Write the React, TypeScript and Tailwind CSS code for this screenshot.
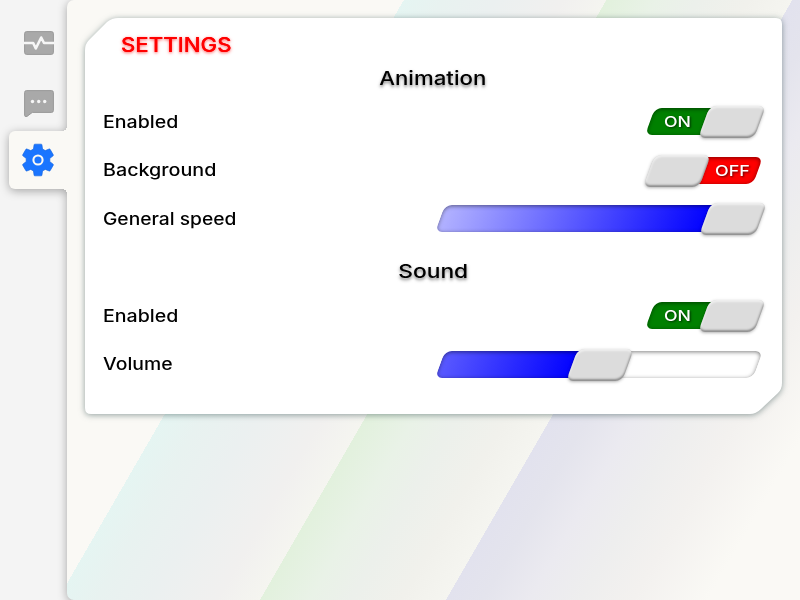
import React from 'react';

const track =
  'absolute inset-0 -skew-x-20 rounded-[7px] overflow-hidden';
const insetShade =
  'absolute inset-0 rounded-[7px] shadow-[inset_0_1px_4px_rgba(0,0,0,0.5)]';
const knob =
  'absolute -top-0.5 h-8 w-[56px] -skew-x-20 rounded-[7px] bg-[#dcdcdc] shadow-[0_1px_3px_rgba(0,0,0,0.3),inset_1px_2px_2px_rgba(255,255,255,0.55),inset_-1px_-2px_2px_rgba(0,0,0,0.35)]';

function Switch({ on }: { on: boolean }) {
  return (
    <div className="relative h-[27px] w-[108px] font-medium text-[15px] leading-[27px] text-white [text-shadow:1px_1px_2px_rgba(0,0,0,0.6)]">
      <div className={`${track} ${on ? 'bg-[#008000]' : 'bg-[#ff0000]'}`}>
        <div className={insetShade} />
      </div>
      <span
        className={`absolute top-0 origin-left ${on ? 'left-[14.5px] scale-x-[1.18]' : 'left-[65px] scale-x-[1.19]'}`}
      >
        {on ? 'ON' : 'OFF'}
      </span>
      <div className={`${knob} ${on ? 'left-[54px]' : '-left-px'}`} />
    </div>
  );
}

function Slider({ value, fill }: { value: number; fill: string }) {
  return (
    <div className="relative h-[27px] w-[318px]">
      <div className={`${track} bg-white`}>
        <div className={`h-full ${fill}`} style={{ width: value + 6 }} />
        <div className={insetShade} />
      </div>
      <div className={knob} style={{ left: value }} />
    </div>
  );
}

function Row({ label, wide, children }: { label: string; wide: string; children: React.ReactNode }) {
  return (
    <div className="flex h-[48.5px] items-center justify-between">
      <span className={`inline-block origin-left pt-px text-[17px] font-medium ${wide}`}>{label}</span>
      {children}
    </div>
  );
}

function MonitorIcon() {
  return (
    <svg width="30" height="24" viewBox="0 0 30 24" fill="#a9a9a9" stroke="#999" strokeWidth="1">
      <rect x="0.6" y="0.6" width="28.8" height="22.8" rx="2" />
      <path d="M0 12H9.2L11.8 17.5 17.2 6.5 20 12H30" fill="none" stroke="#f6f6f6" strokeWidth="2.6" strokeLinejoin="round" />
    </svg>
  );
}

function ChatIcon() {
  return (
    <svg width="30" height="28" viewBox="0 0 30 28">
      <path d="M2.5.6H27.5Q29.4.6 29.4 2.5V20.5Q29.4 22.4 27.5 22.4H8.3L3 26.4Q.6 27.3.6 25V2.5Q.6.6 2.5.6Z" fill="#a9a9a9" stroke="#999" />
      <g fill="#f6f6f6">
        <circle cx="8.5" cy="11.5" r="1.7" />
        <circle cx="14.7" cy="11.5" r="1.7" />
        <circle cx="20.7" cy="11.5" r="1.7" />
      </g>
    </svg>
  );
}

function GearIcon() {
  return (
    <svg width="38" height="38" viewBox="0 0 24 24" fill="#1a75ff" stroke="#1566e0" strokeWidth=".4">
      <path d="M19.43 12.98c.04-.32.07-.64.07-.98s-.03-.66-.07-.98l2.11-1.65c.19-.15.24-.42.12-.64l-2-3.46c-.12-.22-.39-.3-.61-.22l-2.49 1c-.52-.4-1.08-.73-1.69-.98l-.38-2.65C14.46 2.18 14.25 2 14 2h-4c-.25 0-.46.18-.49.42l-.38 2.65c-.61.25-1.17.59-1.69.98l-2.49-1c-.23-.09-.49 0-.61.22l-2 3.46c-.13.22-.07.49.12.64l2.11 1.65c-.04.32-.07.65-.07.98s.03.66.07.98l-2.11 1.65c-.19.15-.24.42-.12.64l2 3.46c.12.22.39.3.61.22l2.49-1c.52.4 1.08.73 1.69.98l.38 2.65c.03.24.24.42.49.42h4c.25 0 .46-.18.49-.42l.38-2.65c.61-.25 1.17-.59 1.69-.98l2.49 1c.23.09.49 0 .61-.22l2-3.46c.12-.22.07-.49-.12-.64l-2.11-1.65z" />
      <circle cx="12" cy="12" r="2.9" stroke="#faf9f5" strokeWidth="1.3" />
    </svg>
  );
}

export default function App() {
  return (
    <div className="grid h-[600px] w-[800px] overflow-hidden bg-[#f4f4f4] font-[Inter,sans-serif] text-black">
      {/* Surface: active tab joined to the main panel, sharing one shadow */}
      <div className="col-start-1 row-start-1 flex [filter:drop-shadow(0_2px_5px_rgba(0,0,0,0.32))]">
        <div className="w-[67px] shrink-0 pl-[9px] pt-[131px]">
          <div className="relative h-[58px] rounded-l-md bg-[#faf9f5]">
            <i className="absolute -top-[5px] right-0 size-[5px] bg-[radial-gradient(circle_at_0_0,transparent_5px,#faf9f5_5px)]" />
            <i className="absolute -bottom-[5px] right-0 size-[5px] bg-[radial-gradient(circle_at_0_100%,transparent_5px,#faf9f5_5px)]" />
          </div>
        </div>
        <div className="h-[600px] w-[733px] rounded-l-[7px] bg-[linear-gradient(120deg,#faf9f5_291.7px,#e5f5f2_291.7px,#e8f2f0_325px,#ebf0f0_370px,#f1f0ef_430px,#f5f5f0_467px,#e2f1dd_467.2px,#e9f2e7_510px,#ecf0eb_545px,#f1f1ec_590px,#f5f5f0_628px,#e2e2ee_628.2px,#e4e4ed_660px,#ebeaf0_700px,#eeeeee_745px,#f3f1ef_790px,#faf9f5_855px)]" />
      </div>
      <div className="relative col-start-1 row-start-1 flex">
        <nav className="flex w-[67px] shrink-0 flex-col pl-[9.5px]">
          <div className="flex h-[131px] flex-col items-start pl-[14px] pt-[30.5px]">
            <MonitorIcon />
            <div className="h-[35px]" />
            <ChatIcon />
          </div>
          <div className="flex h-[57px] items-center justify-center">
            <GearIcon />
          </div>
        </nav>
        <main className="pl-[18px] pt-[18px]">
          <div className="[filter:drop-shadow(0_1px_3px_rgba(40,70,70,0.5))]">
            <section className="h-[396px] w-[697px] bg-white pl-[18px] pr-[24.5px] [clip-path:path('M35_0H691Q697_0_697_6V365Q697_371_693_375L676_391Q671_396_665_396H6Q0_396_0_390V32Q0_26_4_22L22_4Q27_0_33_0Z')]">
              <h1 className="h-[41px] pl-[18px] pt-[12px] text-[20px] font-medium leading-[30px] text-[#ff0000] [text-shadow:0_0_0.5px_#f00,0_1px_3px_rgba(255,0,0,0.7)]">
                <span className="inline-block origin-left scale-x-[1.11]">SETTINGS</span>
              </h1>
              <h2 className="h-[38.5px] pl-[6px] text-center text-[19px] font-medium leading-[40px] [text-shadow:0_2px_3px_rgba(0,0,0,0.5)]">
                <span className="inline-block scale-x-[1.17]">Animation</span>
              </h2>
              <Row label="Enabled" wide="scale-x-[1.15]"><Switch on /></Row>
              <Row label="Background" wide="scale-x-[1.16]"><Switch on={false} /></Row>
              <Row label="General speed" wide="scale-x-[1.13]">
                <Slider value={265} fill="bg-[linear-gradient(90deg,#b3b3ff,#0000ff)]" />
              </Row>
              <h2 className="h-[48.5px] pl-[5px] text-center text-[19px] font-medium leading-[58px] [text-shadow:0_2px_3px_rgba(0,0,0,0.5)]">
                <span className="inline-block scale-x-[1.2]">Sound</span>
              </h2>
              <Row label="Enabled" wide="scale-x-[1.15]"><Switch on /></Row>
              <Row label="Volume" wide="scale-x-[1.14]">
                <Slider value={132} fill="bg-[linear-gradient(90deg,#5a5aff,#0000ff)]" />
              </Row>
            </section>
          </div>
        </main>
      </div>
    </div>
  );
}
